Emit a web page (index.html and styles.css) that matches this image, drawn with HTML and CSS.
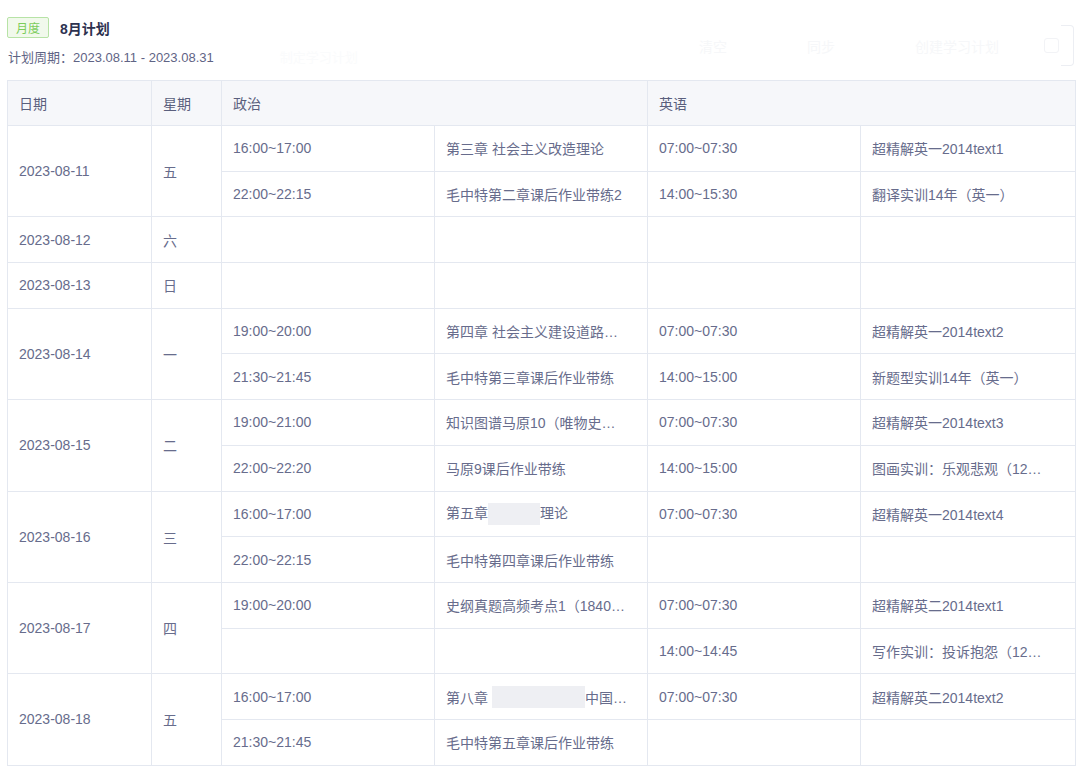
FILE: index.html
```html
<!DOCTYPE html>
<html lang="zh-CN">
<head>
<meta charset="utf-8">
<title>8月计划</title>
<link rel="stylesheet" href="styles.css">
</head>
<body>
<div class="page">
  <div class="top">
    <div class="info">
      <div class="title-row">
        <span class="tag">月度</span>
        <span class="title">8月计划</span>
      </div>
      <div class="period">计划周期：2023.08.11 - 2023.08.31<span class="ghost-note">制定学习计划</span></div>
    </div>
    <div class="toolbar">
      <span class="ghost-btn">清空</span>
      <span class="ghost-btn">同步</span>
      <span class="ghost-btn">创建学习计划</span>
      <span class="ghost-icon"></span>
    </div>
  </div>

  <table class="plan">
    <colgroup>
      <col class="c-date"><col class="c-week"><col class="c-time"><col class="c-text"><col class="c-time"><col class="c-text2">
    </colgroup>
    <thead>
      <tr><th>日期</th><th>星期</th><th colspan="2">政治</th><th colspan="2">英语</th></tr>
    </thead>
    <tbody>
      <tr><td rowspan="2">2023-08-11</td><td rowspan="2">五</td><td>16:00~17:00</td><td><div class="ell">第三章 社会主义改造理论</div></td><td>07:00~07:30</td><td><div class="ell">超精解英一2014text1</div></td></tr>
      <tr><td>22:00~22:15</td><td><div class="ell">毛中特第二章课后作业带练2</div></td><td>14:00~15:30</td><td><div class="ell">翻译实训14年（英一）</div></td></tr>
      <tr><td>2023-08-12</td><td>六</td><td></td><td></td><td></td><td></td></tr>
      <tr><td>2023-08-13</td><td>日</td><td></td><td></td><td></td><td></td></tr>
      <tr><td rowspan="2">2023-08-14</td><td rowspan="2">一</td><td>19:00~20:00</td><td><div class="ell">第四章 社会主义建设道路初步探索的理论成果</div></td><td>07:00~07:30</td><td><div class="ell">超精解英一2014text2</div></td></tr>
      <tr><td>21:30~21:45</td><td><div class="ell">毛中特第三章课后作业带练</div></td><td>14:00~15:00</td><td><div class="ell">新题型实训14年（英一）</div></td></tr>
      <tr><td rowspan="2">2023-08-15</td><td rowspan="2">二</td><td>19:00~21:00</td><td><div class="ell">知识图谱马原10（唯物史观）</div></td><td>07:00~07:30</td><td><div class="ell">超精解英一2014text3</div></td></tr>
      <tr><td>22:00~22:20</td><td><div class="ell">马原9课后作业带练</div></td><td>14:00~15:00</td><td><div class="ell">图画实训：乐观悲观（12年英一）</div></td></tr>
      <tr><td rowspan="2">2023-08-16</td><td rowspan="2">三</td><td>16:00~17:00</td><td><div class="ell">第五章<span class="blur b1"></span>理论</div></td><td>07:00~07:30</td><td><div class="ell">超精解英一2014text4</div></td></tr>
      <tr><td>22:00~22:15</td><td><div class="ell">毛中特第四章课后作业带练</div></td><td></td><td></td></tr>
      <tr><td rowspan="2">2023-08-17</td><td rowspan="2">四</td><td>19:00~20:00</td><td><div class="ell">史纲真题高频考点1（1840-1919）</div></td><td>07:00~07:30</td><td><div class="ell">超精解英二2014text1</div></td></tr>
      <tr><td></td><td></td><td>14:00~14:45</td><td><div class="ell">写作实训：投诉抱怨（12年英二）</div></td></tr>
      <tr><td rowspan="2">2023-08-18</td><td rowspan="2">五</td><td>16:00~17:00</td><td><div class="cut">第八章 <span class="blur b2"></span>中国…</div></td><td>07:00~07:30</td><td><div class="ell">超精解英二2014text2</div></td></tr>
      <tr><td>21:30~21:45</td><td><div class="ell">毛中特第五章课后作业带练</div></td><td></td><td></td></tr>
    </tbody>
  </table>
</div>
</body>
</html>
```

FILE: styles.css
```css
html, body {
  margin: 0;
  padding: 0;
  background: #ffffff;
}
body {
  font-family: "Liberation Sans", "Noto Sans CJK SC", sans-serif;
  color: #676c8c;
  font-size: 14px;
}
.page {
  padding: 17px 6px 0 7px;
}
.top {
  display: flex;
  justify-content: space-between;
  align-items: flex-start;
  height: 63px;
}
.title-row {
  display: flex;
  align-items: center;
  gap: 11px;
  height: 21px;
}
.tag {
  display: inline-flex;
  align-items: center;
  justify-content: center;
  box-sizing: border-box;
  width: 42px;
  height: 21px;
  border: 1px solid #b7e3a6;
  border-radius: 2px;
  background: #f1f9ec;
  color: #7ccd5c;
  font-size: 12px;
}
.title {
  font-size: 14px;
  font-weight: bold;
  color: #2d3250;
}
.period {
  margin-top: 11px;
  font-size: 13px;
  line-height: 18px;
  color: #5f6485;
  margin-left: 1px;
}
.ghost-note {
  margin-left: 66px;
  color: #fafbfc;
}
.toolbar {
  position: relative;
  display: flex;
  align-items: center;
  margin-top: 8px;
  height: 41px;
  padding-right: 15px;
}
.toolbar::after {
  content: "";
  position: absolute;
  right: 0;
  top: 0;
  bottom: 0;
  width: 12px;
  border: 1px solid #eceef3;
  border-left: none;
  border-radius: 0 4px 4px 0;
}
.ghost-btn {
  color: #f6f7f9;
  font-size: 14px;
  margin-left: 80px;
}
.ghost-icon {
  display: inline-block;
  width: 13px;
  height: 13px;
  margin-left: 45px;
  border: 1px solid #f2f3f6;
  border-radius: 3px;
}
.plan {
  border-collapse: collapse;
  table-layout: fixed;
  width: 1068px;
  font-size: 14px;
}
.c-date { width: 144px; }
.c-week { width: 70px; }
.c-time { width: 213px; }
.c-text { width: 213px; }
.c-text2 { width: 215px; }
.plan th,
.plan td {
  border: 1px solid #e4e8f0;
  padding: 0 12px 0 11px;
  text-align: left;
  vertical-align: middle;
  font-weight: normal;
  white-space: nowrap;
  overflow: hidden;
}
.plan th {
  background: #f6f7fa;
  color: #5a5f7d;
  height: 44px;
}
.plan td {
  height: 44.7px;
  color: #676c8c;
}
.ell {
  max-width: 181px;
  overflow: hidden;
  text-overflow: ellipsis;
  white-space: nowrap;
}
.cut {
  white-space: nowrap;
  display: flex;
  align-items: center;
}
.blur {
  display: inline-block;
  height: 22px;
  background: #eeeff3;
  vertical-align: middle;
}
.b1 { width: 52px; }
.b2 { width: 93px; margin-left: 4px; }
```
